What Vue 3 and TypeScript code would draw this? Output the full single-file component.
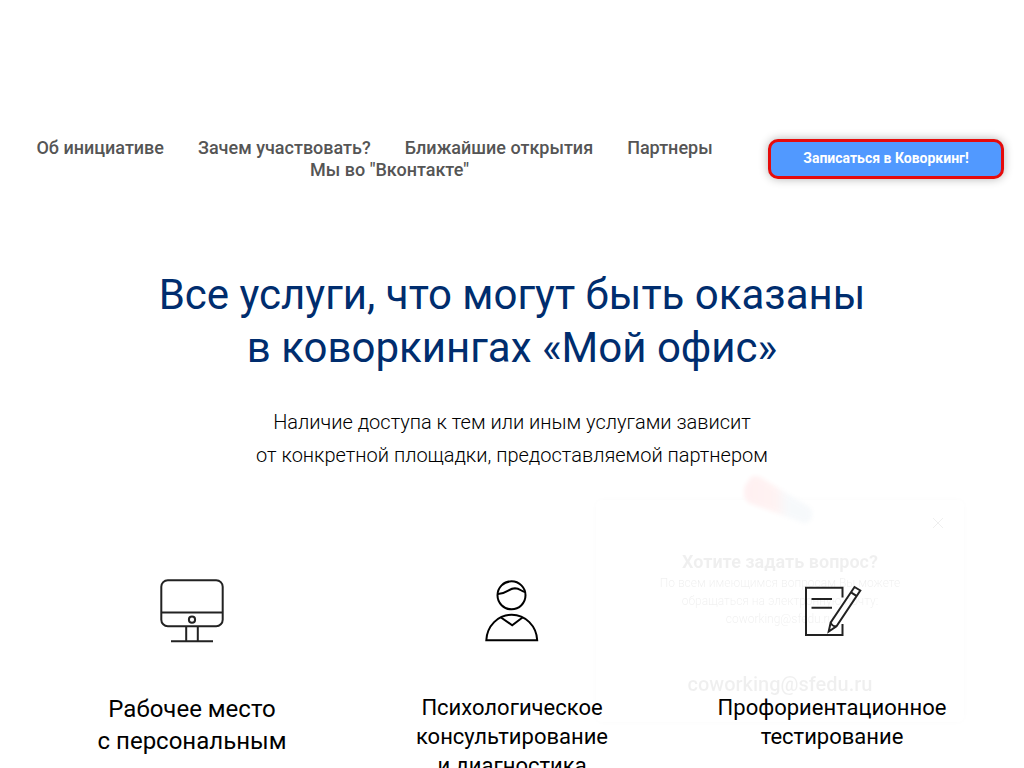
<script setup lang="ts">
interface Service {
  icon: 'monitor' | 'person' | 'note'
  lines: string[]
  large?: boolean
}

const links: string[] = [
  'Об инициативе',
  'Зачем участвовать?',
  'Ближайшие открытия',
  'Партнеры',
  'Мы во "Вконтакте"',
]

const services: Service[] = [
  { icon: 'monitor', lines: ['Рабочее место', 'с персональным'], large: true },
  { icon: 'person', lines: ['Психологическое', 'консультирование', 'и диагностика'] },
  { icon: 'note', lines: ['Профориентационное', 'тестирование'] },
]
</script>

<template>
  <div class="page">
    <header class="header">
      <nav class="nav">
        <a v-for="link in links" :key="link" class="nav-link" href="#">{{ link }}</a>
      </nav>
      <button class="join" type="button">Записаться в Коворкинг!</button>
    </header>

    <main>
      <h1 class="title">Все услуги, что могут быть оказаны<br />в коворкингах «Мой офис»</h1>
      <p class="lead">
        Наличие доступа к тем или иным услугами зависит<br />от конкретной площадки, предоставляемой партнером
      </p>

      <section class="services">
        <article v-for="s in services" :key="s.icon" class="service">
          <svg v-if="s.icon === 'monitor'" class="icon" viewBox="0 0 90 90" aria-hidden="true">
            <rect x="11.3" y="15.2" width="61.4" height="46" rx="6.5" />
            <path d="M11.3 47.5H72.7M36.2 61.5V76M47.8 61.5V76M21 76.2H63" />
            <circle cx="42" cy="54.7" r="3.1" />
          </svg>
          <svg v-else-if="s.icon === 'person'" class="icon dark" viewBox="0 0 90 90" aria-hidden="true">
            <circle cx="41.5" cy="30.3" r="14" />
            <path d="M28 29C37 29 38 23.5 45 23.3C50 23.3 51 26.3 55 27" />
            <path d="M16.3 75.2C17 61 28 49.7 41.7 49.7S66.5 61 67.2 75.2Z" />
            <path d="M31 52.5L42.2 60.2L52.5 52.5" />
          </svg>
          <svg v-else class="icon" viewBox="0 0 90 90" aria-hidden="true">
            <path d="M52.5 32.5V22.8H16V70H52.5V59M21.5 34H42M21.5 42.7H42" />
            <path d="M38.7 66.5L40.7 57.5L64.5 22L70.3 25.5L46.5 61.3ZM40.7 57.5C42 61 44 61.5 46.5 61.3M61 27.3L66.8 31.1" />
          </svg>
          <h2 class="service-title" :class="{ large: s.large }">
            <span v-for="line in s.lines" :key="line" class="line">{{ line }}</span>
          </h2>
        </article>
      </section>
    </main>

    <aside class="popup">
      <svg class="marker" viewBox="0 0 76 54" aria-hidden="true">
        <defs>
          <linearGradient id="marker-fill" x1="0" y1="0" x2="1" y2="0">
            <stop offset="0" stop-color="#ff1020" />
            <stop offset="0.45" stop-color="#ff4040" />
            <stop offset="0.65" stop-color="#7fa5c8" />
            <stop offset="1" stop-color="#6f9cc0" />
          </linearGradient>
        </defs>
        <path d="M11 3Q15 1 20 3L69 33Q74 37 71 45Q67 51 61 48L9 29Q2 24 5 12Z" fill="url(#marker-fill)" />
      </svg>
      <button class="close" type="button" aria-label="Закрыть">
        <svg viewBox="0 0 12 12" aria-hidden="true"><path d="M1 1L11 11M11 1L1 11" /></svg>
      </button>
      <h3 class="popup-title">Хотите задать вопрос?</h3>
      <p class="popup-text">
        По всем имеющимся вопросам Вы можете<br />обращаться на электронную почту:<br />coworking@sfedu.ru
      </p>
      <a class="mail" href="mailto:coworking@sfedu.ru">coworking@sfedu.ru</a>
    </aside>
  </div>
</template>

<style>
body {
  margin: 0;
  background: #fff;
}
</style>

<style scoped>
.page {
  position: relative;
  height: 100vh;
  overflow: hidden;
  box-sizing: border-box;
  padding-top: 137px;
  font-family: Roboto, "Open Sans", sans-serif;
  color: #000;
}

.header {
  display: flex;
  align-items: flex-start;
  justify-content: space-between;
  gap: 24px;
  padding: 0 20px;
}

.nav {
  flex: 1;
  display: flex;
  flex-wrap: wrap;
  justify-content: center;
  column-gap: 4px;
}

.nav-link {
  padding: 0 15px;
  font-size: 18px;
  font-weight: 500;
  line-height: 22px;
  color: #555;
  text-decoration: none;
  white-space: nowrap;
}

.nav-link:first-child {
  padding-left: 0;
}

.nav-link:last-child {
  padding-right: 0;
}

.join {
  width: 236px;
  height: 40px;
  margin-top: 2px;
  padding: 0 0 2px;
  border: 3px solid #e60b0b;
  border-radius: 10px;
  background: #5199ff;
  box-shadow: 0 0 10px rgba(0, 0, 0, 0.3);
  font: 700 14px/22px Roboto, sans-serif;
  color: #fff;
}

.title {
  margin: 87px 0 0;
  font-size: 42px;
  font-weight: 400;
  line-height: 53px;
  text-align: center;
  color: #002d6e;
}

.lead {
  margin: 32px 0 0;
  font-size: 20px;
  font-weight: 300;
  line-height: 33px;
  text-align: center;
}

.services {
  display: grid;
  grid-template-columns: repeat(3, 1fr);
  margin: 93px 32px 0;
}

.service {
  text-align: center;
}

.icon {
  display: block;
  width: 90px;
  height: 90px;
  margin: 0 auto 38px;
  padding-left: 6px;
  fill: none;
  stroke: #222;
  stroke-width: 2;
}

.icon.dark {
  stroke: #000;
}

.service-title {
  margin: 0;
  font-size: 22px;
  font-weight: 400;
  line-height: 29px;
}

.service-title.large {
  font-size: 24px;
  line-height: 32px;
}

.line {
  display: block;
}

.popup {
  position: absolute;
  right: 60px;
  bottom: 46px;
  box-sizing: border-box;
  width: 368px;
  height: 222px;
  padding-top: 50px;
  border-radius: 6px;
  box-shadow: 0 0 6px rgba(0, 0, 0, 0.3);
  text-align: center;
  opacity: 0.06;
}

.marker {
  position: absolute;
  top: -26px;
  left: 144px;
  width: 76px;
  height: 54px;
  overflow: visible;
  filter: blur(2px);
}

.close {
  position: absolute;
  top: 17px;
  right: 20px;
  width: 12px;
  height: 12px;
  padding: 0;
  border: 0;
  background: none;
}

.close svg {
  display: block;
  fill: none;
  stroke: #000;
}

.popup-title {
  margin: 0;
  font-size: 18px;
  font-weight: 700;
  line-height: 24px;
}

.popup-text {
  margin: 0;
  font-size: 12px;
  font-weight: 300;
  line-height: 18px;
}

.mail {
  display: block;
  margin-top: 43px;
  font-size: 20px;
  font-weight: 500;
  line-height: 26px;
  color: #000;
  text-decoration: none;
}
</style>
